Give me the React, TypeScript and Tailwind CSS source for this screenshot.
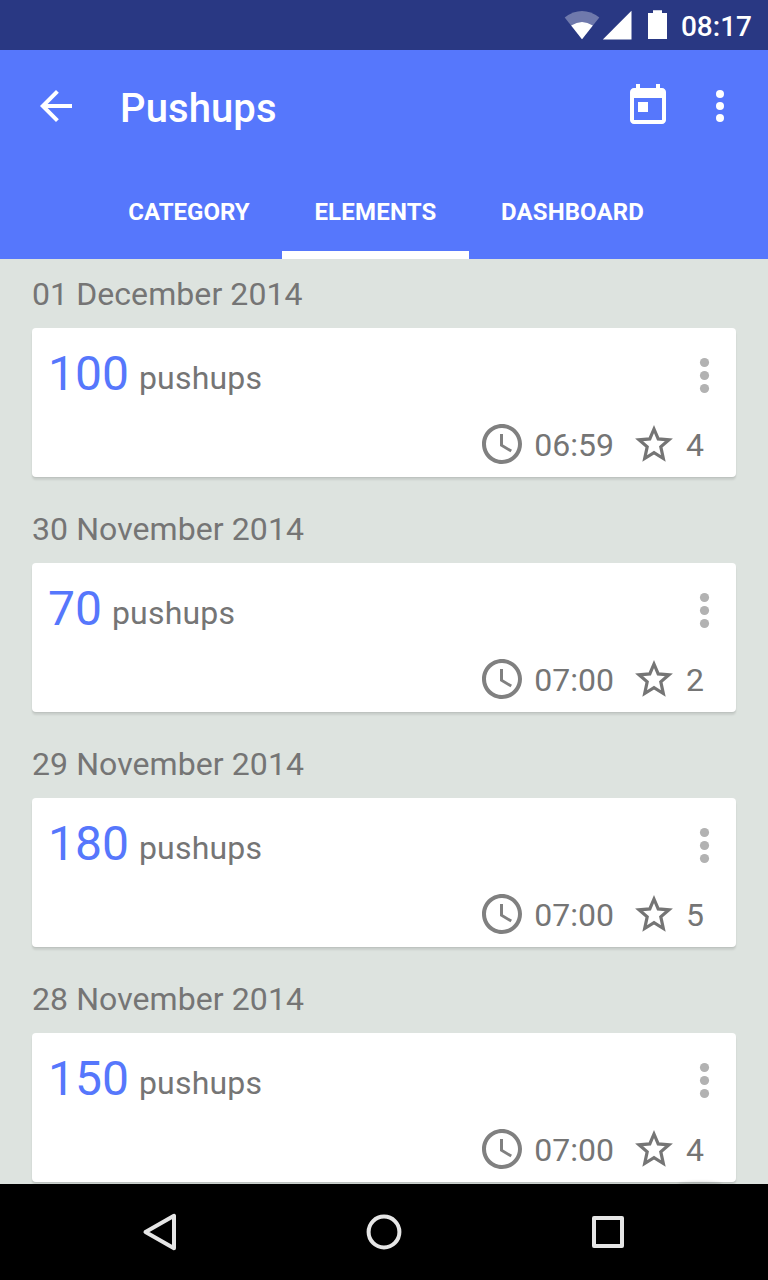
import React from "react";

type Entry = { date: string; count: number; time: string; stars: number };

const entries: Entry[] = [
  { date: "01 December 2014", count: 100, time: "06:59", stars: 4 },
  { date: "30 November 2014", count: 70, time: "07:00", stars: 2 },
  { date: "29 November 2014", count: 180, time: "07:00", stars: 5 },
  { date: "28 November 2014", count: 150, time: "07:00", stars: 4 },
];

function StatusBar() {
  return (
    <div className="flex h-[50px] shrink-0 items-center justify-end bg-[#293883] pr-4 text-white">
      <svg width="104" height="50" viewBox="564 0 104 50" fill="#fff" className="mr-[13px]">
        <path d="M564.7 17.5Q582 4.7 599.3 17.5L582 39.2Z" fillOpacity=".33" />
        <path d="M571.2 25.5Q582 18.5 592.8 25.5L582 39.2Z" />
        <path d="M631.5 10.8V39.6H602.8Z" />
        <path d="M648 13H653V10.2H662V13H667V39H648Z" />
      </svg>
      <span className="pt-[3px] text-[28px] leading-[50px] font-medium">08:17</span>
    </div>
  );
}

function Toolbar() {
  return (
    <div className="flex h-28 items-center pr-6 pl-8 text-white">
      <svg width="48" height="48" viewBox="0 0 24 24" fill="currentColor">
        <path d="M20 11H7.83l5.59-5.59L12 4l-8 8 8 8 1.41-1.41L7.83 13H20v-2z" />
      </svg>
      <h1 className="ml-10 flex-1 pt-1.5 text-[40px] leading-[48px] font-medium tracking-[0.1px]">Pushups</h1>
      <svg width="48" height="48" viewBox="0 0 24 24" fill="currentColor">
        <path d="M19 3h-1V1h-2v2H8V1H6v2H5c-1.11 0-1.99.9-1.99 2L3 19c0 1.1.89 2 2 2h14c1.1 0 2-.9 2-2V5c0-1.1-.9-2-2-2zm0 16H5V8h14v11zM7 10h5v5H7z" />
      </svg>
      <svg width="48" height="48" viewBox="0 0 24 24" fill="currentColor" className="ml-6">
        <circle cx="12" cy="6" r="2" />
        <circle cx="12" cy="12" r="2" />
        <circle cx="12" cy="18" r="2" />
      </svg>
    </div>
  );
}

function Tabs() {
  return (
    <div className="flex h-[97px] pl-24 text-2xl font-bold text-white">
      <div className="flex w-[186px] justify-center pt-[34px] leading-8">CATEGORY</div>
      <div className="flex w-[187px] justify-center border-b-8 border-white pt-[34px] leading-8 tracking-[0.2px]">ELEMENTS</div>
      <div className="flex w-[207px] justify-center pt-[34px] leading-8 tracking-[0.1px]">DASHBOARD</div>
    </div>
  );
}

function EntryGroup({ entry }: { entry: Entry }) {
  return (
    <section className="h-[235px] shrink-0 px-8 text-[32px] text-[#757575]">
      <h2 className="h-[69px] pt-[3px] leading-[64px] tracking-[0.08px]">{entry.date}</h2>
      <div className="flex h-[149px] flex-col rounded-[4px] bg-white shadow-[0_3px_2px_rgba(0,0,0,0.09),0_1px_1px_rgba(0,0,0,0.06)]">
        <div className="flex h-[92px] items-start pl-4">
          <span className="text-5xl leading-[92px] text-[#5677fc]">{entry.count}</span>
          <span className="ml-2.5 flex-1 pt-1 leading-[92px] tracking-[0.2px]">pushups</span>
          <svg width="14" height="40" viewBox="0 0 14 40" fill="#b2b2b2" className="mr-[25px] self-center">
            <circle cx="7.5" cy="8.5" r="4.6" />
            <circle cx="7.5" cy="21.5" r="4.6" />
            <circle cx="7.5" cy="34.5" r="4.6" />
          </svg>
        </div>
        <div className="flex h-12 items-center justify-end pr-8">
          <svg width="48" height="48" viewBox="0 0 24 24" fill="#808080">
            <path d="M11.99 2C6.47 2 2 6.48 2 12s4.47 10 9.99 10C17.52 22 22 17.52 22 12S17.52 2 11.99 2zM12 20c-4.42 0-8-3.58-8-8s3.58-8 8-8 8 3.58 8 8-3.58 8-8 8z" />
            <path d="M12.5 7H11v6l5.25 3.15.75-1.23-4.5-2.67z" />
          </svg>
          <span className="ml-2 pt-0.5 leading-[48px]">{entry.time}</span>
          <svg width="40" height="40" viewBox="0 0 40 40" fill="none" stroke="#757575" strokeWidth="3.2" strokeMiterlimit="6" className="ml-5">
            <path d="M20 5L24.2 14.9L35 15.8L26.8 22.9L29.3 34.5L20 28.7L10.7 34.5L13.2 22.9L5 15.8L15.8 14.9Z" />
          </svg>
          <span className="ml-3 pt-0.5 leading-[48px]">{entry.stars}</span>
        </div>
      </div>
    </section>
  );
}

function NavigationBar() {
  return (
    <nav className="flex h-24 shrink-0 items-center justify-between bg-black px-[136px]">
      <svg width="48" height="48" viewBox="0 0 48 48" fill="none" stroke="#e6e6e6" strokeWidth="4" strokeLinejoin="round">
        <path d="M9.5 24L38 7.8V40.2Z" />
      </svg>
      <svg width="48" height="48" viewBox="0 0 48 48" fill="none" stroke="#e6e6e6" strokeWidth="4">
        <circle cx="24" cy="24" r="15.4" />
      </svg>
      <svg width="48" height="48" viewBox="0 0 48 48" fill="none" stroke="#e6e6e6" strokeWidth="4" strokeLinejoin="round">
        <path d="M10 10H38V38H10Z" />
      </svg>
    </nav>
  );
}

export default function App() {
  return (
    <div className="flex h-[1280px] w-[768px] flex-col overflow-hidden bg-[#dde3df] font-['Roboto',sans-serif]">
      <StatusBar />
      <header className="shrink-0 bg-[#5677fc]">
        <Toolbar />
        <Tabs />
      </header>
      <main className="relative min-h-0 flex-1 overflow-hidden">
        {entries.map((entry) => (
          <EntryGroup key={entry.date} entry={entry} />
        ))}
        <div className="absolute right-[46px] -bottom-[3px] h-[6px] w-11 rounded-[50%] bg-black/10 blur-[1px]" />
      </main>
      <NavigationBar />
    </div>
  );
}
